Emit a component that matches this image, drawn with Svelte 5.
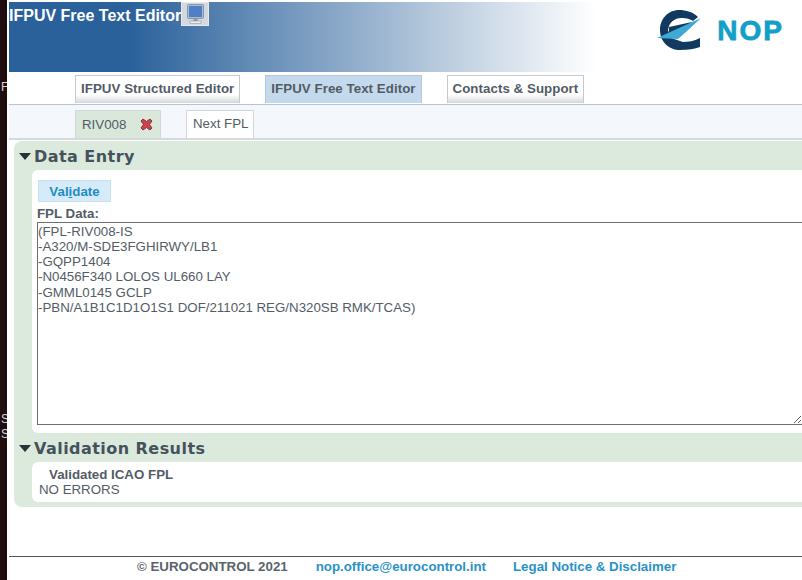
<script>
  let fplData = `(FPL-RIV008-IS
-A320/M-SDE3FGHIRWY/LB1
-GQPP1404
-N0456F340 LOLOS UL660 LAY
-GMML0145 GCLP
-PBN/A1B1C1D1O1S1 DOF/211021 REG/N320SB RMK/TCAS)`;
</script>

<div class="page">
  <aside class="strip">
    <span class="strip-f">F</span>
    <span class="strip-s">S</span>
    <span class="strip-s2">S</span>
  </aside>

  <div class="main">
    <header class="banner">
      <div class="title">
        <h1>IFPUV Free Text Editor</h1>
        <span class="monitor">
          <svg width="17" height="20" viewBox="0 0 17 20">
            <rect x="0.5" y="0.5" width="16" height="14" rx="1" fill="#a9bccd" stroke="#8798a8" />
            <rect x="2" y="2" width="13" height="11" fill="#4f7fc4" />
            <rect x="6.500" y="15" width="4" height="2" fill="#8f979f" />
            <rect x="3" y="17" width="11" height="2.500" fill="#eceef0" stroke="#8f979f" stroke-width="0.6" />
          </svg>
        </span>
      </div>
      <div class="logo">
        <svg width="46" height="42" viewBox="0 0 46 42">
          <path d="M42 7 C37 2 30 0 23 0 C12 0 4 9 4 20 C4 32 13 40 24 40 C32 40 39 39 44 37 L44 28 C38 31 32 32 27 32 L15 28 L12 20 L13 16 C15 11 20 8 25 8 C31 8 34 9 37 11 Z" fill="#12395f" />
          <path d="M13 17 L36 12 L30 18 L13 24 Z" fill="#12395f" />
          <path d="M45 8 L1 28 L22 29 L30 22 Z" fill="#3fa9d6" />
        </svg>
        <span class="nop">NOP</span>
      </div>
    </header>

    <nav class="tabs">
      <a class="tab" href="#structured">IFPUV Structured Editor</a>
      <a class="tab active" href="#free">IFPUV Free Text Editor</a>
      <a class="tab" href="#contacts">Contacts &amp; Support</a>
    </nav>

    <div class="subtabs">
      <div class="subtab current">
        <span>RIV008</span>
        <svg width="13" height="13" viewBox="0 0 13 13">
          <path d="M3 1 L6.500 3.500 L10 1 L12 3 L9.500 6.500 L12 10 L10 12 L6.500 9.500 L3 12 L1 10 L3.500 6.500 L1 3 Z" fill="#d2404c" stroke="#7d3a3c" stroke-width="1" />
        </svg>
      </div>
      <div class="subtab next">Next FPL</div>
    </div>

    <section class="panel">
      <h2><span class="arrow"></span>Data Entry</h2>
      <div class="body entry">
        <button class="validate">Val<u>i</u>date</button>
        <label for="fpl">FPL Data:</label>
        <textarea id="fpl" bind:value={fplData}></textarea>
      </div>
      <h2><span class="arrow"></span>Validation Results</h2>
      <div class="body results">
        <div class="result-title">Validated ICAO FPL</div>
        <div>NO ERRORS</div>
      </div>
    </section>

    <footer>
      <span class="copy">© EUROCONTROL 2021</span>
      <a href="#mail">nop.office@eurocontrol.int</a>
      <a href="#legal">Legal Notice &amp; Disclaimer</a>
    </footer>
  </div>
</div>

<style>
  :global(body) {
    margin: 0;
    background: #fff;
    overflow: hidden;
  }

  .page {
    display: flex;
    width: 802px;
    height: 580px;
    font-family: "Liberation Sans", Arial, sans-serif;
    overflow: hidden;
  }

  .strip {
    position: relative;
    flex: 0 0 7px;
    background: #1f0d0f;
    color: #d8d4d4;
    font-size: 12px;
    overflow: hidden;
  }

  .strip span {
    position: absolute;
    left: 1px;
  }
  .strip-f { top: 80px; }
  .strip-s { top: 412px; }
  .strip-s2 { top: 427px; }

  .main {
    flex: 0 0 795px;
    width: 795px;
    padding-left: 2px;
    box-sizing: border-box;
    display: flex;
    flex-direction: column;
  }

  .banner {
    margin-top: 2px;
    height: 70px;
    flex: none;
    display: flex;
    justify-content: space-between;
    background: linear-gradient(90deg, #2a619b 0%, #2a619b 15%, #fff 74%);
  }

  .title {
    display: flex;
    align-items: flex-start;
  }

  h1 {
    margin: 5px 0 0;
    font-size: 16px;
    line-height: 18px;
    color: #fff;
    font-weight: bold;
  }

  .monitor {
    width: 28px;
    height: 24px;
    background: #d3d9df;
    border: 1px solid #e8eaec;
    box-sizing: border-box;
    display: flex;
    align-items: center;
    justify-content: center;
  }

  .logo {
    display: flex;
    align-items: center;
    gap: 15px;
    margin: 8px 18px 0 0;
    height: 42px;
  }

  .nop {
    font-size: 28px;
    font-weight: bold;
    color: #12a0c8;
    letter-spacing: 2px;
    -webkit-text-stroke: 0.8px #12a0c8;
  }

  .tabs {
    flex: none;
    height: 33px;
    display: flex;
    align-items: flex-end;
    gap: 25px;
    padding: 0 0 1px 66px;
    border-bottom: 1px solid #b9c4d2;
    box-sizing: border-box;
  }

  .tab {
    height: 28px;
    padding: 0 5px;
    line-height: 26px;
    box-sizing: border-box;
    font-size: 13.300px;
    font-weight: bold;
    letter-spacing: 0.05px;
    color: #525c66;
    text-decoration: none;
    border: 1px solid #c4c9ce;
    border-bottom: 0;
    background: linear-gradient(#fff 70%, #d4d6d8);
  }

  .tab.active {
    background: #c5d9ec;
    border-color: #b7c7d6;
  }

  .subtabs {
    flex: none;
    height: 35px;
    display: flex;
    align-items: flex-end;
    gap: 25px;
    padding-left: 66px;
    background: #f4f7fc;
    border-bottom: 2px solid #d5d9dc;
    box-sizing: border-box;
  }

  .subtab {
    height: 28px;
    box-sizing: border-box;
    padding: 0 6px;
    font-size: 13.300px;
    line-height: 25px;
    color: #525c66;
    border: 1px solid #d3d7da;
    border-bottom: 0;
  }

  .current {
    width: 86px;
    background: #d9e8db;
    display: flex;
    align-items: center;
    justify-content: space-between;
    padding-right: 7px;
  }

  .next {
    width: 68px;
    background: #fff;
    white-space: nowrap;
  }

  .panel {
    flex: none;
    margin: 1px 0 0 5px;
    background: #dce9dd;
    border-radius: 8px 0 0 8px;
    padding-left: 18px;
    padding-bottom: 5px;
  }

  h2 {
    margin: 0 0 0 -13px;
    height: 29px;
    box-sizing: border-box;
    padding-top: 2px;
    font-size: 16px;
    line-height: 26px;
    font-weight: bold;
    color: #45525c;
    letter-spacing: 0.45px;
    font-family: "DejaVu Sans", Verdana, sans-serif;
    display: flex;
    align-items: center;
    gap: 3px;
  }

  .arrow {
    width: 0;
    height: 0;
    border-left: 6px solid transparent;
    border-right: 6px solid transparent;
    border-top: 7px solid #2b3138;
  }

  .body {
    background: #fff;
    border-radius: 6px 0 0 6px;
    font-size: 13.300px;
    color: #525c66;
  }

  .entry {
    height: 263px;
    box-sizing: border-box;
    padding: 10px 0 0 5px;
    display: flex;
    flex-direction: column;
    align-items: flex-start;
  }

  .validate {
    height: 22px;
    width: 73px;
    margin-left: 1px;
    padding: 0;
    border: 1px solid #c8e0f0;
    background: #d6ebf9;
    color: #1f8cc4;
    font: bold 13.300px "Liberation Sans", Arial, sans-serif;
  }

  label {
    font-weight: bold;
    font-size: 13.300px;
    margin-top: 4px;
    margin-bottom: 1px;
    line-height: 15px;
    color: #525c66;
  }

  textarea {
    width: 766px;
    height: 203px;
    flex: none;
    box-sizing: border-box;
    margin: 0;
    padding: 1px 0 0 0;
    border: 1px solid #6f6f6f;
    font: 13.300px/15.150px "Liberation Sans", Arial, sans-serif;
    color: #525c66;
    outline: none;
  }

  .results {
    height: 40px;
    padding: 5px 0 0 7px;
    box-sizing: border-box;
    line-height: 15px;
  }

  .result-title {
    font-weight: bold;
    padding-left: 10px;
  }

  footer {
    margin-top: 49px;
    height: 24px;
    border-top: 1px solid #55595c;
    font-size: 13.300px;
    font-weight: bold;
    padding: 1px 0 0 128px;
    display: flex;
    gap: 27px;
    line-height: 17px;
  }

  .copy {
    color: #5a646c;
    margin-right: 1px;
  }

  footer a {
    color: #2a92c8;
    text-decoration: none;
  }
</style>
